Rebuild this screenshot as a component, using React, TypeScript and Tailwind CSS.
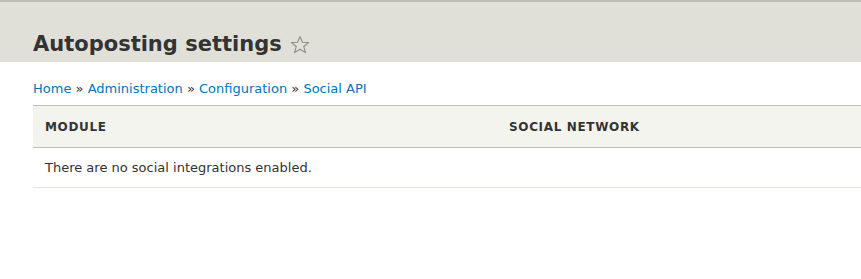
export default function App() {
  return (
    <div className="min-h-[279px] bg-white font-['DejaVu_Sans',sans-serif] text-[#333] overflow-hidden">
      <header className="bg-[#e0e0d8] border-t-2 border-[#bebdb7] h-[62px] px-[33px] pt-[27px]">
        <h1 className="flex items-center gap-[8px] text-[21px] font-bold leading-[30px] text-[#333]">
          Autoposting settings
          <svg width="20" height="20" viewBox="0 0 20 20" className="mt-[1px]">
            <polygon
              points="10,1.5 12.5,7.3 18.6,7.6 13.8,11.5 15.4,17.6 10,14.2 4.6,17.6 6.2,11.5 1.4,7.6 7.5,7.3"
              fill="none"
              stroke="#8e8e86"
              strokeWidth="1.1"
              strokeLinejoin="round"
            />
          </svg>
        </h1>
      </header>
      <main className="px-[33px] pt-[18px]">
        <nav className="text-[13px] leading-[18px] text-[#333]">
          <a href="#" className="text-[#0074bd]">Home</a> »{" "}
          <a href="#" className="text-[#0074bd]">Administration</a> »{" "}
          <a href="#" className="text-[#0074bd]">Configuration</a> »{" "}
          <a href="#" className="text-[#0074bd]">Social API</a>
        </nav>
        <table className="mt-[7px] w-[928px] border-collapse text-left">
          <thead>
            <tr className="bg-[#f3f4ee] border-t border-b border-[#bfbfba] h-[42px]">
              <th className="w-1/2 px-[12px] text-[12px] font-bold uppercase tracking-[0.65px] text-[#333]">
                Module
              </th>
              <th className="w-1/2 px-[12px] text-[12px] font-bold uppercase tracking-[0.65px] text-[#333]">
                Social network
              </th>
            </tr>
          </thead>
          <tbody>
            <tr className="border-b border-[#e6e4df] h-[40px]">
              <td colSpan={2} className="px-[12px] text-[13px] text-[#333]">
                There are no social integrations enabled.
              </td>
            </tr>
          </tbody>
        </table>
      </main>
    </div>
  );
}
